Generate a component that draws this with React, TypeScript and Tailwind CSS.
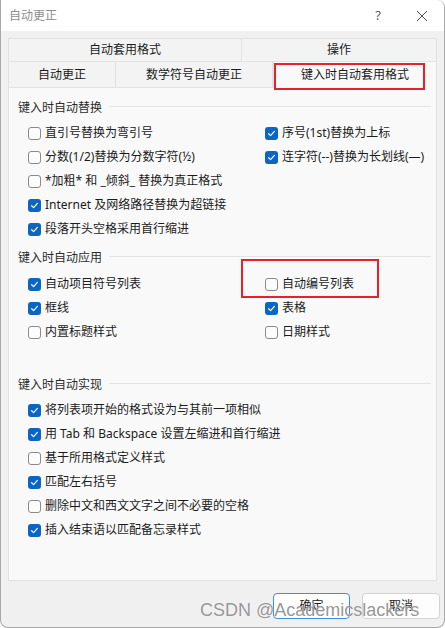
import React from "react";

const FONT = { fontFamily: '"Noto Sans", "Noto Sans CJK SC", sans-serif' };

function Box({ checked }: { checked: boolean }) {
  if (checked) {
    return (
      <span className="flex h-[13px] w-[13px] shrink-0 items-center justify-center rounded-[3px] bg-[#0b65c2]">
        <svg width="13" height="13" viewBox="0 0 13 13">
          <path d="M3.6 6.7 L5.6 8.6 L9.4 4.4" fill="none" stroke="#ffffff" strokeWidth="1.2" strokeLinecap="round" strokeLinejoin="round" />
        </svg>
      </span>
    );
  }
  return <span className="h-[13px] w-[13px] shrink-0 rounded-[3px] border border-[#8b8b8b] bg-[#fcfcfc]" />;
}

function Item({ label, checked }: { label: string; checked: boolean }) {
  return (
    <div className="flex h-[24px] items-center gap-[4px] whitespace-nowrap text-[12px] leading-none text-[#1b1b1b]">
      <Box checked={checked} />
      <span>{label}</span>
    </div>
  );
}

function Heading({ text }: { text: string }) {
  return (
    <div className="flex h-[16px] items-center gap-[7px] pr-[5px] text-[12px] leading-none text-[#2b2b2b]">
      <span className="whitespace-nowrap">{text}</span>
      <span className="mt-[-3px] h-px flex-1 bg-[#e3e3e3]" />
    </div>
  );
}

type Cell = [string, boolean] | null;

function Rows({ rows }: { rows: [Cell, Cell][] }) {
  return (
    <div className="grid grid-cols-[237px_1fr] pl-[10px]">
      {rows.map(([a, b], i) => (
        <React.Fragment key={i}>
          {a ? <Item label={a[0]} checked={a[1]} /> : <div className="h-[24px]" />}
          {b ? <Item label={b[0]} checked={b[1]} /> : <div className="h-[24px]" />}
        </React.Fragment>
      ))}
    </div>
  );
}

export default function App() {
  return (
    <div className="relative h-[628px] w-[445px] overflow-hidden bg-white" style={FONT}>
      <div className="flex h-[628px] w-[445px] flex-col overflow-hidden rounded-tr-[8px] rounded-b-[8px] border-b border-l border-r border-[#a8a8a8] bg-[#f0f0f0]">
        {/* title bar */}
        <div className="flex h-[31px] shrink-0 items-center bg-white">
          <span className="ml-[8px] text-[12px] leading-none text-[#8e8e8e]">自动更正</span>
          <span className="ml-auto mr-[35px] text-[13px] leading-none text-[#5a5a5a]">?</span>
          <svg width="12" height="12" viewBox="0 0 12 12" className="mr-[16px]">
            <path d="M1 1 L11 11 M11 1 L1 11" stroke="#4a4a4a" strokeWidth="1" />
          </svg>
        </div>

        {/* body */}
        <div className="flex flex-1 flex-col px-[7px]">
          {/* tab row 1 */}
          <div className="mt-[7px] flex h-[24px] text-[12px] leading-none text-[#1b1b1b]">
            <div className="flex w-[233px] items-center justify-center border border-r-0 border-[#e2e2e2] bg-[#f3f3f3]">自动套用格式</div>
            <div className="flex flex-1 items-center justify-center border border-[#e2e2e2] bg-[#f3f3f3]">操作</div>
          </div>
          {/* tab row 2 */}
          <div className="flex h-[25px] items-start text-[12px] leading-none text-[#1b1b1b]">
            <div className="flex h-[25px] w-[108px] items-center justify-center border-l border-r border-[#e2e2e2] bg-[#f3f3f3]">自动更正</div>
            <div className="flex h-[25px] w-[157px] items-center justify-center border-r border-[#e2e2e2] bg-[#f3f3f3]">数学符号自动更正</div>
            <div className="relative z-10 mt-[-1px] flex h-[27px] flex-1 items-center justify-center border border-b-0 border-[#e2e2e2] bg-[#f9f9f9]">键入时自动套用格式</div>
          </div>

          {/* panel */}
          <div className="flex h-[494px] flex-col border border-[#e2e2e2] bg-[#f9f9f9] pl-[9px] pt-[12px]">
            <Heading text="键入时自动替换" />
            <div className="mt-[5px]">
              <Rows
                rows={[
                  [["直引号替换为弯引号", false], ["序号(1st)替换为上标", true]],
                  [["分数(1/2)替换为分数字符(½)", false], ["连字符(--)替换为长划线(—)", true]],
                  [["*加粗* 和 _倾斜_ 替换为真正格式", false], null],
                  [["Internet 及网络路径替换为超链接", true], null],
                  [["段落开头空格采用首行缩进", true], null],
                ]}
              />
            </div>

            <div className="mt-[9px]">
              <Heading text="键入时自动应用" />
            </div>
            <div className="mt-[6px]">
              <Rows
                rows={[
                  [["自动项目符号列表", true], ["自动编号列表", false]],
                  [["框线", true], ["表格", true]],
                  [["内置标题样式", false], ["日期样式", false]],
                ]}
              />
            </div>

            <div className="mt-[33px]">
              <Heading text="键入时自动实现" />
            </div>
            <div className="mt-[5px] pl-[10px]">
              <Item label="将列表项开始的格式设为与其前一项相似" checked={true} />
              <Item label="用 Tab 和 Backspace 设置左缩进和首行缩进" checked={true} />
              <Item label="基于所用格式定义样式" checked={false} />
              <Item label="匹配左右括号" checked={true} />
              <Item label="删除中文和西文文字之间不必要的空格" checked={false} />
              <Item label="插入结束语以匹配备忘录样式" checked={true} />
            </div>
          </div>

          {/* buttons */}
          <div className="mt-[12px] flex justify-end gap-[12px]">
            <button className="flex h-[26px] w-[77px] items-center justify-center rounded-[4px] border border-[#3d8fe0] bg-[#fdfdfd] text-[12px] leading-none text-[#1b1b1b]">确定</button>
            <button className="mr-[-3px] flex h-[26px] w-[78px] items-center justify-center rounded-[4px] border border-[#d3d3d3] bg-[#fdfdfd] text-[12px] leading-none text-[#1b1b1b]">取消</button>
          </div>
        </div>
      </div>

      {/* red annotation boxes */}
      <div className="pointer-events-none absolute left-[274px] top-[63px] z-20 h-[27px] w-[151px] border-2 border-[#e8202a]" />
      <div className="pointer-events-none absolute left-[241px] top-[259px] z-20 h-[39px] w-[138px] border-2 border-[#e8202a]" />

      {/* watermark */}
      <div
        className="pointer-events-none absolute left-[200px] top-[601px] z-20 whitespace-nowrap text-[18px] leading-none text-[#8a8a8a]/90"
        style={{ fontFamily: '"Liberation Sans", Arial, sans-serif', textShadow: "0 0 1px #ffffff" }}
      >
        CSDN @Academicslackers
      </div>
    </div>
  );
}
